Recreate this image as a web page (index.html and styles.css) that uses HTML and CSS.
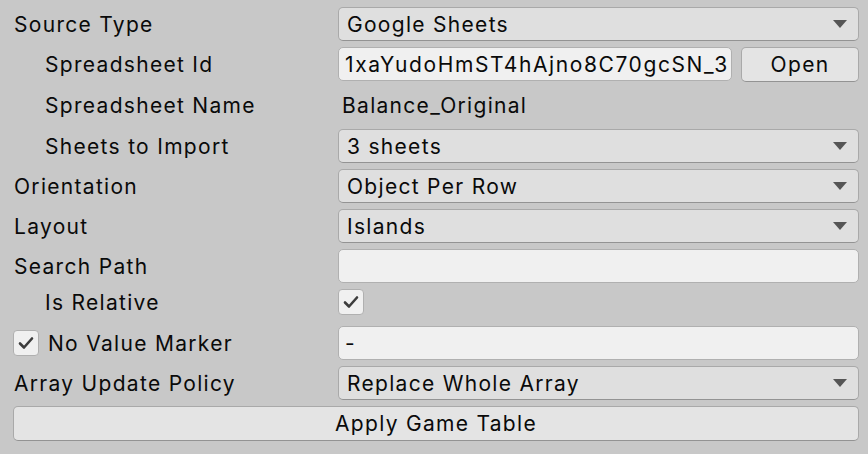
FILE: index.html
```html
<!DOCTYPE html>
<html lang="en">
  <head>
    <meta charset="UTF-8" />
    <title>Game Table Importer</title>
    <link rel="stylesheet" href="styles.css">
  </head>

  <body>
    <div class="inspector">
      <div class="row">
        <div class="label">Source Type</div>
        <div class="field popup">Google Sheets<span class="arrow"></span></div>
      </div>
      <div class="row">
        <div class="label indent">Spreadsheet Id</div>
        <div class="field split">
          <div class="text_field id_field"><span>1xaYudoHmST4hAjno8C70gcSN_3</span></div>
          <div class="button open_btn">Open</div>
        </div>
      </div>
      <div class="row name_row">
        <div class="label indent">Spreadsheet Name</div>
        <div class="field plain">Balance_Original</div>
      </div>
      <div class="row">
        <div class="label indent">Sheets to Import</div>
        <div class="field popup">3 sheets<span class="arrow"></span></div>
      </div>
      <div class="row">
        <div class="label">Orientation</div>
        <div class="field popup">Object Per Row<span class="arrow"></span></div>
      </div>
      <div class="row">
        <div class="label">Layout</div>
        <div class="field popup">Islands<span class="arrow"></span></div>
      </div>
      <div class="row">
        <div class="label">Search Path</div>
        <div class="field text_field"></div>
      </div>
      <div class="row toggle_row">
        <div class="label indent">Is Relative</div>
        <div class="field">
          <div class="checkbox">
            <svg viewBox="0 0 26 26" width="26" height="26"><polyline points="7,13.5 11,17.5 19,8.5" /></svg>
          </div>
        </div>
      </div>
      <div class="row">
        <div class="label toggle_label">
          <div class="checkbox">
            <svg viewBox="0 0 26 26" width="26" height="26"><polyline points="7,13.5 11,17.5 19,8.5" /></svg>
          </div>
          No Value Marker
        </div>
        <div class="field text_field">-</div>
      </div>
      <div class="row">
        <div class="label">Array Update Policy</div>
        <div class="field popup">Replace Whole Array<span class="arrow"></span></div>
      </div>
      <div class="button apply_btn">Apply Game Table</div>
    </div>
  </body>
</html>
```

FILE: styles.css
```css
html,
body {
  margin: 0;
  padding: 0;
  width: 100%;
  height: 100%;
  background-color: #c8c8c8;
  font-family: Inter, "Noto Sans", sans-serif;
  font-size: 21px;
  letter-spacing: 1.3px;
  color: #0a0a0a;
}

.inspector {
  display: flex;
  flex-direction: column;
  gap: 6px;
  padding: 7px 9px 0 13px;
}

.row {
  display: flex;
  align-items: center;
  height: 34px;
}

.name_row {
  height: 36px;
  padding-top: 1px;
  box-sizing: border-box;
}

.toggle_row {
  height: 26px;
  margin-bottom: 5px;
}

.label {
  width: 324px;
  padding-left: 1px;
  white-space: nowrap;
  flex-shrink: 0;
}

.label.indent {
  padding-left: 32px;
  width: 293px;
}

.toggle_label {
  display: flex;
  align-items: center;
  gap: 9px;
  padding-left: 0;
  width: 325px;
}

.field {
  flex: 1;
  height: 34px;
  box-sizing: border-box;
  display: flex;
  align-items: center;
  white-space: nowrap;
}

.toggle_row .field {
  height: 26px;
}

.popup {
  position: relative;
  background-color: #dfdfdf;
  border: 1px solid #a9a9a9;
  border-bottom-color: #939393;
  border-radius: 5px;
  padding-left: 8px;
}

.arrow {
  position: absolute;
  right: 11px;
  top: 12px;
  width: 0;
  height: 0;
  border-left: 7px solid transparent;
  border-right: 7px solid transparent;
  border-top: 8px solid #555555;
}

.text_field {
  background-color: #f0f0f0;
  border: 1px solid #b0b0b0;
  border-radius: 5px;
  padding-left: 6px;
  height: 34px;
  box-sizing: border-box;
  display: flex;
  align-items: center;
}

.split {
  gap: 9px;
}

.id_field {
  width: 394px;
  flex-shrink: 0;
  overflow: hidden;
  padding-right: 2px;
  letter-spacing: 1.6px;
}

.id_field span {
  flex: 1;
  min-width: 0;
  overflow: hidden;
  white-space: nowrap;
}

.plain {
  padding-left: 4px;
}

.button {
  background-color: #e4e4e4;
  border: 1px solid #a9a9a9;
  border-bottom-color: #939393;
  border-radius: 5px;
  box-sizing: border-box;
  display: flex;
  align-items: center;
  justify-content: center;
}

.open_btn {
  flex: 1;
  height: 35px;
  margin-top: 1px;
}

.apply_btn {
  height: 35px;
}

.checkbox {
  width: 26px;
  height: 26px;
  box-sizing: border-box;
  background-color: #f0f0f0;
  border: 1px solid #b0b0b0;
  border-radius: 4px;
  flex-shrink: 0;
}

.checkbox svg {
  display: block;
  margin: -1px;
}

.checkbox polyline {
  fill: none;
  stroke: #3c3c3c;
  stroke-width: 2.6;
  stroke-linecap: round;
  stroke-linejoin: round;
}
```
